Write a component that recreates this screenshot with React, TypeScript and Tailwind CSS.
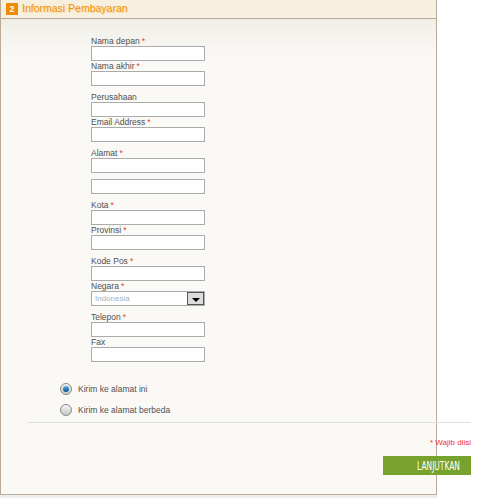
import React from "react";

interface IField {
  label: string;
  required?: boolean;
}

const groups: IField[][] = [
  [{ label: "Nama depan", required: true }, { label: "Nama akhir", required: true }],
  [{ label: "Perusahaan" }, { label: "Email Address", required: true }],
  [{ label: "Alamat", required: true }],
  [{ label: "Kota", required: true }, { label: "Provinsi", required: true }],
  [{ label: "Kode Pos", required: true }, { label: "Negara", required: true }],
  [{ label: "Telepon", required: true }, { label: "Fax" }],
];

const Label: React.FC<IField> = ({ label, required }) => {
  return (
    <p className="h-[10px] text-[8.5px] leading-[10px] text-[#505050]">
      {label}
      {required && <span className="ml-[2px] text-[#e8401c]">*</span>}
    </p>
  );
};

const TextBox = () => {
  return <div className="h-[15px] w-[114px] border border-[#ababab] bg-white" />;
};

const SelectBox = () => {
  return (
    <div className="flex h-[15px] w-[114px] border border-[#ababab] bg-white">
      <span className="flex-1 pl-[3px] text-[8px] leading-[13px] text-[#9fb3c8]">
        Indonesia
      </span>
      <div className="flex w-[17px] items-end justify-center border border-[#555] bg-[#dcdcdc] pb-[2px]">
        <div className="h-0 w-0 border-x-[4px] border-t-[4px] border-x-transparent border-t-black" />
      </div>
    </div>
  );
};

const Radio: React.FC<{ label: string; checked?: boolean }> = ({ label, checked }) => {
  return (
    <div className="flex h-[12px] items-center">
      <div className="flex h-[12px] w-[12px] items-center justify-center rounded-full border border-[#8a8a8a] bg-gradient-to-b from-[#f4f4f4] to-[#c8c8c8]">
        {checked && (
          <div className="h-[6px] w-[6px] rounded-full bg-gradient-to-b from-[#5ab0e8] to-[#0b4f8a]" />
        )}
      </div>
      <span className="ml-[6px] text-[8.5px] text-[#505050]">{label}</span>
    </div>
  );
};

const App = () => {
  return (
    <div
      className="h-[498px] w-[489px] overflow-hidden bg-white"
      style={{ fontFamily: '"Liberation Sans", Arial, sans-serif' }}
    >
      <div className="h-[495px] w-[437px] border-x border-b border-[#b9ab97] bg-[#faf9f6]">
        {/* header */}
        <div className="flex h-[19px] items-center border-b border-[#b9ab97] bg-[#f8f0df] pl-[5px]">
          <div className="flex h-[12px] w-[12px] items-center justify-center bg-[#f08a00] text-[9px] font-bold leading-none text-white">
            2
          </div>
          <span className="ml-[4px] text-[10.5px] text-[#f39200] [text-shadow:1px_1px_0_#f8d8a8]">
            Informasi Pembayaran
          </span>
        </div>

        {/* body */}
        <div className="bg-gradient-to-b from-[#efeee6] to-[#faf9f6] to-[40px] pt-[17px]">
          <div className="ml-[90px] flex flex-col gap-[6px]">
            {groups.map((group, gi) => (
              <div key={gi}>
                {group.map((f) => (
                  <div key={f.label}>
                    <Label label={f.label} required={f.required} />
                    {f.label === "Negara" ? <SelectBox /> : <TextBox />}
                  </div>
                ))}
                {gi === 2 && (
                  <div className="mt-[6px]">
                    <TextBox />
                  </div>
                )}
              </div>
            ))}
          </div>

          <div className="ml-[59px] mt-[21px] flex flex-col gap-[9px]">
            <Radio label="Kirim ke alamat ini" checked />
            <Radio label="Kirim ke alamat berbeda" />
          </div>

          <div className="ml-[27px] mr-[-35px] mt-[6px] h-px bg-[#dedede]" />

          <div className="mr-[-35px] mt-[15px] flex flex-col items-end">
            <p className="h-[10px] text-[8px] leading-[10px] text-[#ee3030]">* Wajib diisi</p>
            <button className="mt-[8px] flex h-[19px] w-[88px] items-center justify-end bg-[#77a22d] pr-[11px]">
              <span
                className="inline-block origin-right scale-x-[0.64] text-[13px] leading-none text-white"
                style={{ fontFamily: '"DejaVu Sans Condensed", "Liberation Sans", sans-serif' }}
              >
                LANJUTKAN
              </span>
            </button>
          </div>
        </div>
      </div>
      <div className="h-[3px] w-[437px] bg-[#eeeeee]" />
    </div>
  );
};

export default App;
